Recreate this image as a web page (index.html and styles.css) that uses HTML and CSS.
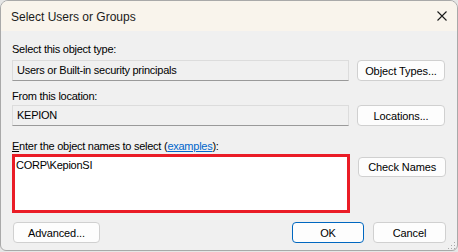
FILE: index.html
```html
<!DOCTYPE html>
<html lang="en">
<head>
    <meta charset="UTF-8">
    <title>Select Users or Groups</title>
    <link rel="stylesheet" href="styles.css">
</head>
<body>
    <div class="window">
        <div class="title-bar">
            <span class="title">Select Users or Groups</span>
            <svg class="close" width="10" height="10" viewBox="0 0 10 10">
                <path d="M0.5 0.5 L9.5 9.5 M9.5 0.5 L0.5 9.5" stroke="#1a1a1a" stroke-width="1.1" fill="none"/>
            </svg>
        </div>

        <div class="content">
            <div class="label first">Select this object type:</div>
            <div class="row">
                <div class="field">Users or Built-in security principals</div>
                <button class="btn">Object Types...</button>
            </div>

            <div class="label second">From this location:</div>
            <div class="row">
                <div class="field">KEPION</div>
                <button class="btn">Locations...</button>
            </div>

            <div class="label third"><u>E</u>nter the object names to select (<a href="#" class="link">examples</a>):</div>
            <div class="row top">
                <div class="names">CORP\KepionSI</div>
                <button class="btn check">Check Names</button>
            </div>

            <div class="footer">
                <button class="btn advanced">Advanced...</button>
                <div class="spacer"></div>
                <button class="btn ok">OK</button>
                <button class="btn cancel">Cancel</button>
            </div>
        </div>

        <svg class="grip" width="9" height="9" viewBox="0 0 9 9">
            <rect x="7" y="1" width="1" height="1" fill="#a8a8a8"/>
            <rect x="4" y="4" width="1" height="1" fill="#a8a8a8"/>
            <rect x="7" y="4" width="1" height="1" fill="#a8a8a8"/>
            <rect x="1" y="7" width="1" height="1" fill="#a8a8a8"/>
            <rect x="4" y="7" width="1" height="1" fill="#a8a8a8"/>
            <rect x="7" y="7" width="1" height="1" fill="#a8a8a8"/>
        </svg>
    </div>
</body>
</html>
```

FILE: styles.css
```css
body {
    margin: 0;
    padding: 0;
    background-color: #e6e6e6;
    font-family: "Liberation Sans", Arial, sans-serif;
    font-size: 11px;
    color: #000;
}
.window {
    position: relative;
    width: 458px;
    height: 251px;
    box-sizing: border-box;
    border: 1px solid #a9a9a9;
    border-radius: 8px 8px 6px 6px;
    background-color: #f0f0f0;
    overflow: hidden;
}
.title-bar {
    height: 30px;
    display: flex;
    align-items: center;
    justify-content: space-between;
    padding: 0 10px 0 10px;
    background-color: #f9f4ec;
}
.title {
    font-size: 12px;
    color: #1a1a1a;
    padding-top: 1px;
}
.content {
    display: flex;
    flex-direction: column;
    padding: 0 11px 0 11px;
    letter-spacing: -0.25px;
}
.label {
    line-height: 13px;
    height: 13px;
}
.label.first {
    margin-top: 12px;
    margin-bottom: 4px;
}
.label.second {
    margin-top: 9px;
    margin-bottom: 2px;
}
.label.third {
    margin-top: 14px;
    margin-bottom: 1px;
}
.link {
    color: #0066cc;
}
.row {
    display: flex;
    align-items: center;
    gap: 8px;
}
.row.top {
    align-items: flex-start;
}
.field {
    width: 337px;
    height: 21px;
    box-sizing: border-box;
    line-height: 19px;
    padding-left: 4px;
    background-color: #f0f0f0;
    border: 1px solid #dcdcdc;
    border-bottom-color: #9a9a9a;
}
.btn {
    width: 88px;
    height: 21px;
    box-sizing: border-box;
    padding: 0;
    font-family: "Liberation Sans", Arial, sans-serif;
    font-size: 11px;
    letter-spacing: -0.1px;
    color: #000;
    background-color: #fdfdfd;
    border: 1px solid #d0d0d0;
    border-radius: 4px;
}
.names {
    width: 340px;
    height: 59px;
    box-sizing: border-box;
    border: 3px solid #ea1c26;
    background-color: #fff;
    padding: 2px 0 0 1px;
    line-height: 13px;
}
.check {
    margin-top: 3px;
    height: 20px;
}
.footer {
    display: flex;
    margin-top: 9px;
    gap: 9px;
}
.advanced {
    width: 87px;
    margin-left: 1px;
}
.spacer {
    flex: 1;
}
.ok {
    width: 72px;
    border: 1px solid #0067c0;
}
.cancel {
    width: 73px;
}
.grip {
    position: absolute;
    right: 1px;
    bottom: 0;
}
```
